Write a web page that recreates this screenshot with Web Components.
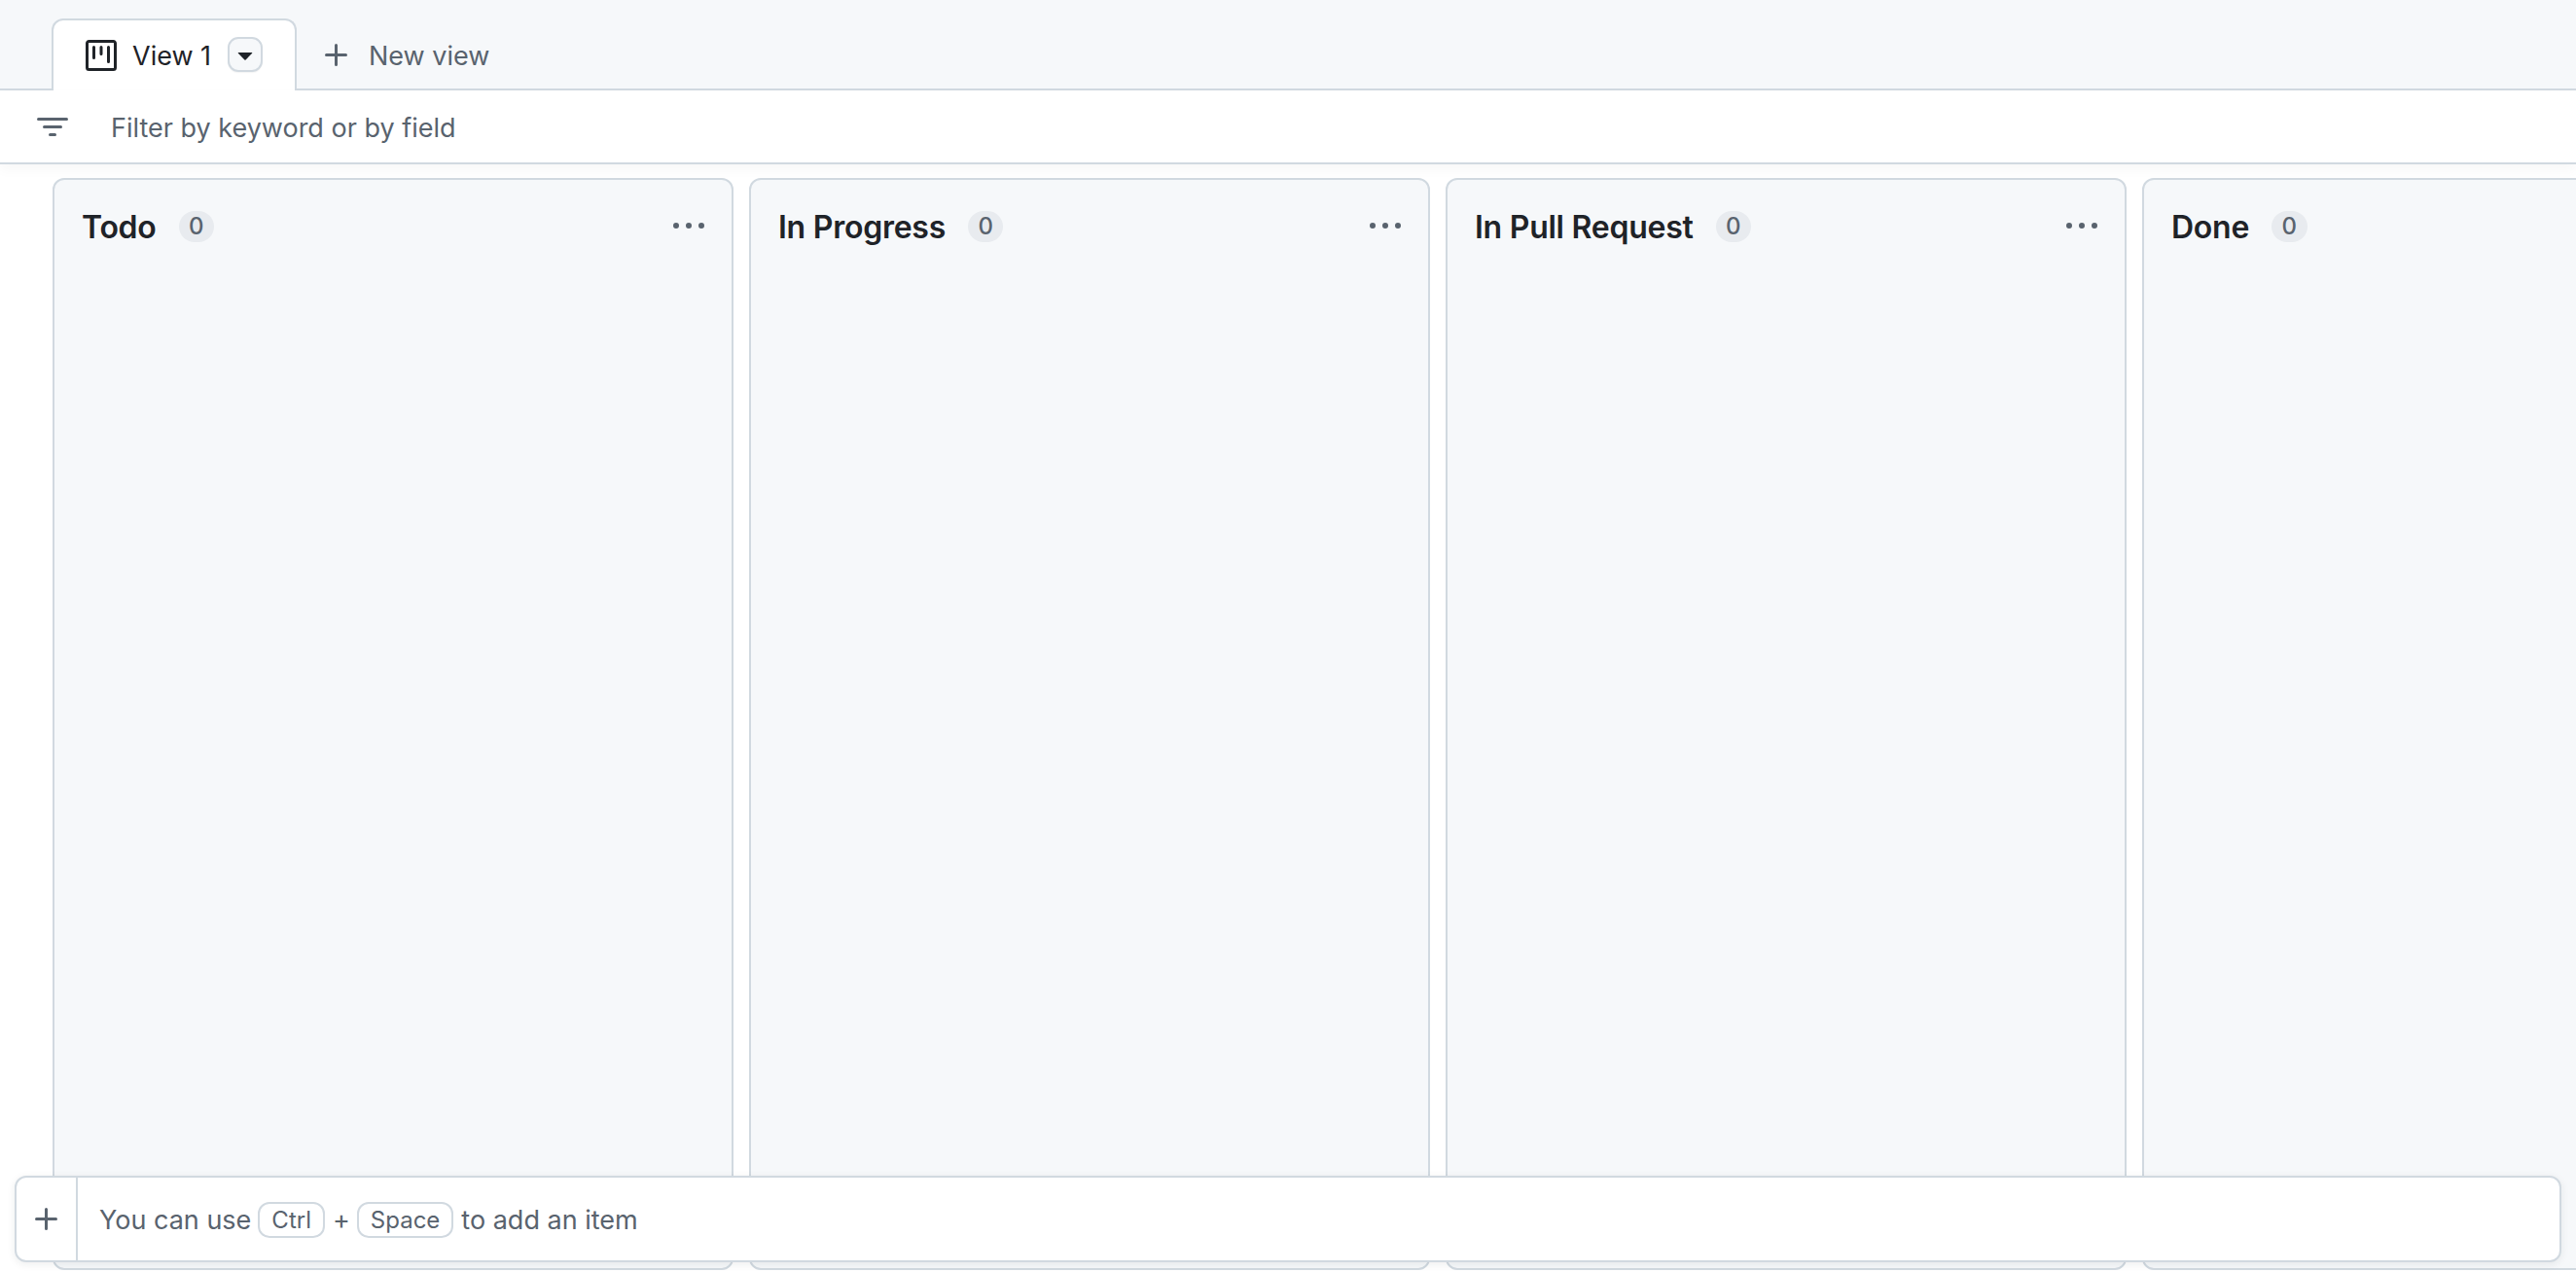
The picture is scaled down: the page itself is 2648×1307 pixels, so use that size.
<!DOCTYPE html>
<html><head><meta charset="utf-8">
<style>
html,body{margin:0;padding:0;height:100%;background:#fff;overflow:hidden}
body{font-family:Inter,"Liberation Sans",sans-serif;color:#1f2328}
project-page{height:1307px}
</style></head>
<body>
<project-page></project-page>
<script>
const svg=(w,vb,body)=>`<svg width="${w}" height="${w}" viewBox="0 0 ${vb} ${vb}" fill="currentColor" aria-hidden="true">${body}</svg>`;
const ICONS={
 board:'<path d="M1.75 0h12.5C15.216 0 16 .784 16 1.75v12.5A1.75 1.75 0 0 1 14.25 16H1.75A1.75 1.75 0 0 1 0 14.25V1.75C0 .784.784 0 1.75 0ZM1.5 1.75v12.5c0 .138.112.25.25.25h12.5a.25.25 0 0 0 .25-.25V1.75a.25.25 0 0 0-.25-.25H1.75a.25.25 0 0 0-.25.25ZM11.75 3a.75.75 0 0 1 .75.75v7.5a.75.75 0 0 1-1.5 0v-7.5a.75.75 0 0 1 .75-.75Zm-8.25.75a.75.75 0 0 1 1.5 0v5.5a.75.75 0 0 1-1.5 0ZM8 3a.75.75 0 0 1 .75.75v3.5a.75.75 0 0 1-1.5 0v-3.5A.75.75 0 0 1 8 3Z"/>',
 plus:'<path d="M7.75 2a.75.75 0 0 1 .75.75V7h4.25a.75.75 0 0 1 0 1.5H8.5v4.25a.75.75 0 0 1-1.5 0V8.5H2.75a.75.75 0 0 1 0-1.5H7V2.75A.75.75 0 0 1 7.75 2Z"/>',
 filter:'<path d="M.75 3h14.5a.75.75 0 0 1 0 1.5H.75a.75.75 0 0 1 0-1.5ZM3 7.75A.75.75 0 0 1 3.75 7h8.5a.75.75 0 0 1 0 1.5h-8.5A.75.75 0 0 1 3 7.75Zm3 4a.75.75 0 0 1 .75-.75h2.5a.75.75 0 0 1 0 1.5h-2.5a.75.75 0 0 1-.75-.75Z"/>',
 kebab:'<path d="M8 9a1.5 1.5 0 1 0 0-3 1.5 1.5 0 0 0 0 3ZM1.5 9a1.5 1.5 0 1 0 0-3 1.5 1.5 0 0 0 0 3Zm13 0a1.5 1.5 0 1 0 0-3 1.5 1.5 0 0 0 0 3Z"/>',
 caret:'<path d="m4.427 7.427 3.396 3.396a.25.25 0 0 0 .354 0l3.396-3.396A.25.25 0 0 0 11.396 7H4.604a.25.25 0 0 0-.177.427Z"/>'
};
class BaseEl extends HTMLElement{
 constructor(){super();this.attachShadow({mode:'open'});}
 connectedCallback(){this.shadowRoot.innerHTML=this.render();}
}
class GhIcon extends BaseEl{
 render(){const n=this.getAttribute('name'),s=this.getAttribute('size')||32;
  return `<style>:host{display:inline-flex;flex:none;color:inherit}svg{display:block}</style>${svg(s,16,ICONS[n])}`;}
}
customElements.define('gh-icon',GhIcon);
class ViewTabs extends BaseEl{
 render(){return `<style>
 :host{display:flex;align-items:flex-end;height:93px;box-sizing:border-box;padding:19px 0 0 53px;background:#f6f8fa;border-bottom:2px solid #d1d9e0;flex:none}
 .tab{display:flex;align-items:center;box-sizing:border-box;width:252px;height:74px;margin-bottom:-2px;padding:0 0 0 33px;background:#fff;border:2px solid #d1d9e0;border-bottom:0;border-radius:12px 12px 0 0;color:#1f2328;font-size:27px}
 .tab .label{margin-left:16px;padding-top:1px}
 .caret{width:36px;height:36px;box-sizing:border-box;margin:-3px 0 0 17px;border:2px solid #d1d9e0;border-radius:11px;display:flex;align-items:center;justify-content:center;background:#f6f8fa;box-shadow:0 1px 1px rgba(31,35,40,.05)}
 .new{display:flex;align-items:center;height:74px;margin:0 0 -3px 25px;color:#59636e;font-size:27px}
 .new span{margin-left:17px}
 </style>
 <div class="tab"><gh-icon name="board" size="32"></gh-icon><span class="label">View 1</span><span class="caret"><gh-icon name="caret" size="32"></gh-icon></span></div>
 <div class="new"><gh-icon name="plus" size="32"></gh-icon><span>New view</span></div>`;}
}
customElements.define('view-tabs',ViewTabs);
class FilterBar extends BaseEl{
 render(){return `<style>
 :host{display:flex;align-items:center;height:76px;box-sizing:border-box;padding-left:38px;background:#fff;border-bottom:2px solid #d1d9e0;flex:none;color:#59636e;font-size:27px;position:relative;z-index:1;box-shadow:0 6px 12px rgba(31,35,40,.03)}
 span{margin-left:44px;padding-top:3px}
 gh-icon{margin-top:1px}
 </style><gh-icon name="filter" size="32"></gh-icon><span>Filter by keyword or by field</span>`;}
}
customElements.define('filter-bar',FilterBar);
class BoardColumn extends BaseEl{
 render(){return `<style>
 :host{display:block;flex:none;width:700px;box-sizing:border-box;background:#f6f8fa;border:2px solid #d1d9e0;border-radius:12px;padding:30px 28px 0}
 .head{display:flex;align-items:center;height:36px}
 h2{margin:0;padding-top:1px;font-size:32px;line-height:36px;font-weight:600;color:#1f2328;letter-spacing:-.25px}
 .count{margin-left:23px;min-width:36px;height:32px;box-sizing:border-box;padding:0 10.5px;border-radius:16px;background:#e8ebef;color:#59636e;font-size:24px;font-weight:500;line-height:32px;text-align:center}
 .more{margin-left:auto;color:#59636e;display:flex}
 </style><div class="head"><h2><slot></slot></h2><span class="count">0</span><span class="more"><gh-icon name="kebab" size="32"></gh-icon></span></div>`;}
}
customElements.define('board-column',BoardColumn);
class KeyCap extends BaseEl{
 render(){return `<style>:host{display:inline-flex;align-items:center;height:37px;box-sizing:border-box;padding:0 12px;margin-top:1px;border:2px solid #d1d9e0;border-radius:12px;font-size:24px;color:#59636e;background:#fff}</style><slot></slot>`;}
}
customElements.define('key-cap',KeyCap);
class AddItem extends BaseEl{
 render(){return `<style>
 :host{display:flex;position:absolute;left:15px;right:15px;bottom:9px;height:89px;box-sizing:border-box;background:#fff;border:2px solid #d1d9e0;border-radius:12px;z-index:2;box-shadow:0 2px 8px rgba(31,35,40,.08);color:#59636e;font-size:27px}
 .plus{flex:none;width:61px;border-right:2px solid #d1d9e0;display:flex;align-items:center;justify-content:center}
 .txt{display:flex;align-items:center;padding:1px 0 0 22px;white-space:pre}
 .txt > key-cap{margin-left:7px;margin-right:8px}
 </style><div class="plus"><gh-icon name="plus" size="32"></gh-icon></div><div class="txt">You can use<key-cap>Ctrl</key-cap>+<key-cap>Space</key-cap>to add an item</div>`;}
}
customElements.define('add-item',AddItem);
class ProjectPage extends BaseEl{
 render(){return `<style>
 :host{display:flex;flex-direction:column;position:relative;height:1307px;width:2648px;overflow:hidden;background:#fff}
 .board{flex:1;min-height:0;display:flex;gap:16px;padding:14px 0 1px 54px;overflow:hidden;box-sizing:border-box}
 </style><view-tabs></view-tabs><filter-bar></filter-bar>
 <div class="board"><board-column>Todo</board-column><board-column>In Progress</board-column><board-column>In Pull Request</board-column><board-column>Done</board-column></div>
 <add-item></add-item>`;}
}
customElements.define('project-page',ProjectPage);
</script>
</body></html>
